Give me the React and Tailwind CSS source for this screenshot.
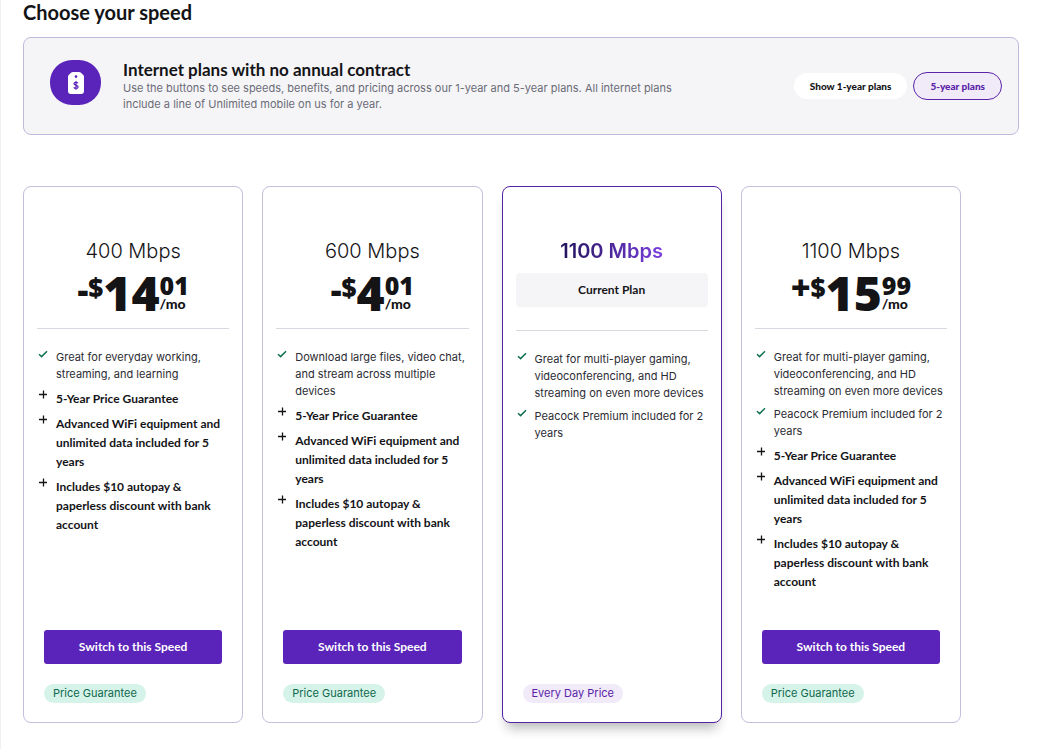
const heading = "font-['Lato',sans-serif]";
const body = "font-['Inter',sans-serif]";
const figures = "font-['Open_Sans',sans-serif]";

const guarantee = [
  { bold: true, text: '5-Year Price Guarantee' },
  { bold: true, text: 'Advanced WiFi equipment and unlimited data included for 5 years' },
  { bold: true, text: 'Includes $10 autopay & paperless discount with bank account' },
];

const gigFeatures = [
  { text: 'Great for multi-player gaming, videoconferencing, and HD streaming on even more devices' },
  { text: 'Peacock Premium included for 2 years' },
];

const plans = [
  {
    id: 'p400',
    speed: '400 Mbps',
    price: { sign: '-', dollars: '14', cents: '01' },
    features: [{ text: 'Great for everyday working, streaming, and learning' }, ...guarantee],
  },
  {
    id: 'p600',
    speed: '600 Mbps',
    price: { sign: '-', dollars: '4', cents: '01' },
    features: [
      { text: 'Download large files, video chat, and stream across multiple devices' },
      ...guarantee,
    ],
  },
  { id: 'p1100-current', speed: '1100 Mbps', current: true, features: gigFeatures },
  {
    id: 'p1100',
    speed: '1100 Mbps',
    price: { sign: '+', dollars: '15', cents: '99' },
    features: [...gigFeatures, ...guarantee],
  },
];

function PriceTagIcon() {
  return (
    <svg viewBox="0 0 16 22" className="h-[22px] w-4" aria-hidden="true">
      <path d="M5 0h6q1 0 1.700.6L15.300 3q.7.7.7 1.700V19a3 3 0 0 1-3 3H3a3 3 0 0 1-3-3V4.700Q0 3.700.7 3L3.300.6Q4 0 5 0z" fill="#fff" />
      <circle cx="8" cy="4.600" r="1.300" fill="#5a23b9" />
      <path
        d="M10 11.300C9.600 10.600 9 10.300 8 10.300c-1.200 0-2 .6-2 1.500 0 2.200 4.100 1 4.100 3.100 0 .9-.9 1.500-2.100 1.500-1.100 0-1.900-.4-2.200-1.200M8 9v8.700"
        fill="none"
        stroke="#5a23b9"
        strokeWidth="1.200"
      />
    </svg>
  );
}

function CheckIcon() {
  return (
    <svg viewBox="0 0 10 10" className="size-[10px] shrink-0" fill="none" aria-hidden="true">
      <path d="M1 5.200 3.600 7.600 9 2.200" stroke="#0f7053" strokeWidth="1.500" />
    </svg>
  );
}

function PlusIcon() {
  return (
    <svg viewBox="0 0 10 10" className="size-[10px] shrink-0" fill="none" aria-hidden="true">
      <path d="M1 5.500h8M5.500 1.500v8" stroke="#141417" strokeWidth="1.300" />
    </svg>
  );
}

function Price({ sign, dollars, cents }) {
  return (
    <div className={`flex h-12 justify-center ${figures} font-extrabold text-[#141417]`}>
      <span className={sign === '+' ? 'text-[34px] leading-7' : 'text-[34px] leading-8'}>{sign}</span>
      <span className="text-[26px] leading-7">$</span>
      <span className="text-[48px] leading-10">{dollars}</span>
      <span className="flex flex-col">
        <span className="text-[25px] leading-6">{cents}</span>
        <span className={`text-[14px] leading-[14px] ${heading} font-black`}>/mo</span>
      </span>
    </div>
  );
}

function PlanCard({ plan }) {
  const frame = plan.current
    ? 'border-[#5522a0] shadow-[0_10px_12px_-5px_rgba(20,20,23,0.3)]'
    : 'border-[#c5bedd]';
  return (
    <article className={`flex flex-col rounded-lg border bg-white px-[13px] pb-[19px] pt-[50px] ${frame}`}>
      <h3
        className={
          plan.current
            ? 'self-center bg-linear-to-r from-[#21135b] to-[#7d3fe0] bg-clip-text text-xl leading-7 font-semibold text-transparent'
            : 'self-center text-xl leading-7 font-light text-[#141417]'
        }
      >
        {plan.speed}
      </h3>
      {plan.current ? (
        <p className={`mt-2 rounded-sm bg-[#f5f5f8] text-center text-xs leading-[34px] text-[#141417] ${heading} font-bold`}>
          Current Plan
        </p>
      ) : (
        <div className="mt-2">
          <Price {...plan.price} />
        </div>
      )}
      <hr className={plan.current ? 'mt-[23px] border-[#d8d8e0]' : 'mt-[7px] border-[#d8d8e0]'} />
      <ul className="mt-5 flex flex-col gap-[6px] pl-px">
        {plan.features.map((feature) => (
          <li key={feature.text} className="flex items-start gap-2">
            {feature.bold ? <PlusIcon /> : <CheckIcon />}
            <span
              className={
                feature.bold
                  ? `text-xs leading-[19px] text-[#141417] ${heading} font-bold`
                  : 'text-[11px] leading-[17px] text-[#2b2b33]'
              }
            >
              {feature.text}
            </span>
          </li>
        ))}
      </ul>
      <div className="mt-auto px-[7px] pt-[39px]">
        {!plan.current && (
          <button
            type="button"
            className={`mb-5 h-[34px] w-full rounded-[3px] bg-[#5a23b9] text-xs text-white ${heading} font-bold`}
          >
            Switch to this Speed
          </button>
        )}
        <div className="flex">
          <span
            className={
              plan.current
                ? 'rounded-full bg-[#f0eaf9] px-[9px] text-[11px] leading-[19px] text-[#5a23a8]'
                : 'rounded-full bg-[#d6f3e9] px-[9px] text-[11px] leading-[19px] text-[#10684e]'
            }
          >
            {plan.current ? 'Every Day Price' : 'Price Guarantee'}
          </span>
        </div>
      </div>
    </article>
  );
}

export default function App() {
  return (
    <main className={`min-h-screen border-l border-[#f0f0f3] bg-white pr-[21px] pb-[25px] pl-[22px] text-[#141417] ${body}`}>
      <h1 className={`${heading} text-xl leading-6 font-bold`}>Choose your speed</h1>

      <section className="mt-[13px] flex items-center rounded-lg border border-[#c0b9dc] bg-[#f5f5f8] py-[22px] pr-4 pl-[26px]">
        <div className="flex h-[45px] w-[51px] shrink-0 items-center justify-center self-start rounded-[22px] bg-[#5a23b9]">
          <PriceTagIcon />
        </div>
        <div className="ml-[22px] max-w-[580px]">
          <h2 className={`${heading} text-[17px] leading-5 font-bold`}>Internet plans with no annual contract</h2>
          <p className="text-[11px] leading-4 text-[#6b6b76]">
            Use the buttons to see speeds, benefits, and pricing across our 1-year and 5-year plans. All internet plans
            include a line of Unlimited mobile on us for a year.
          </p>
        </div>
        <div className={`ml-auto flex shrink-0 items-center gap-[6px] ${heading} text-[10px] font-black`}>
          <button type="button" className="h-[26px] rounded-full bg-white px-4">
            Show 1-year plans
          </button>
          <button
            type="button"
            aria-pressed="true"
            className="h-7 rounded-full border border-[#5a23a8] bg-[#f0eaf9] px-4 text-[#5a23a8]"
          >
            5-year plans
          </button>
        </div>
      </section>

      <section className="mt-[51px] mr-[58px] grid grid-cols-4 gap-[19px]">
        {plans.map((plan) => (
          <PlanCard key={plan.id} plan={plan} />
        ))}
      </section>
    </main>
  );
}
